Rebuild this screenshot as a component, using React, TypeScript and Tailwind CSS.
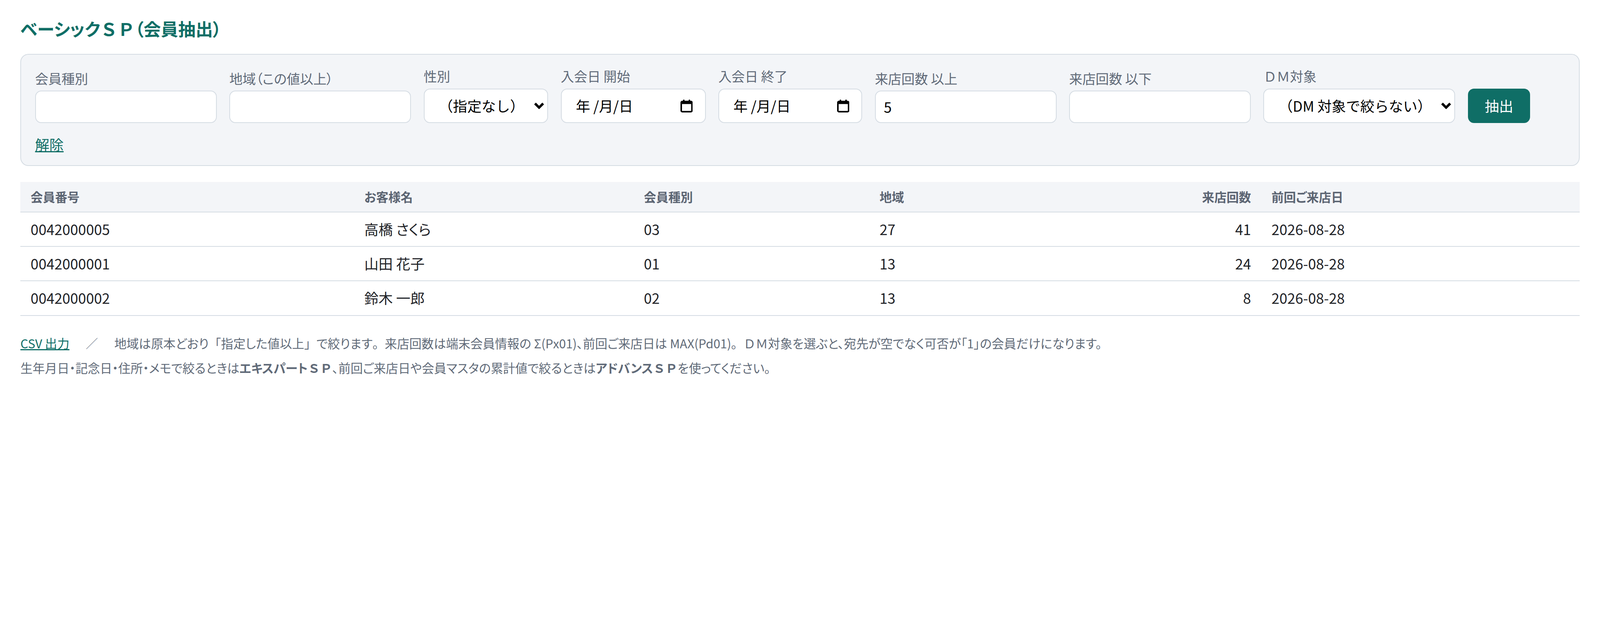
import { type ReactNode } from 'react';

const rows = [
  { no: '0042000005', name: '高橋 さくら', kind: '03', area: '27', visits: 41, last: '2026-08-28' },
  { no: '0042000001', name: '山田 花子', kind: '01', area: '13', visits: 24, last: '2026-08-28' },
  { no: '0042000002', name: '鈴木 一郎', kind: '02', area: '13', visits: 8, last: '2026-08-28' },
];

// 全角英字（ＳＰ・ＤＭ）や一部の約物は詰めずに表示する
const Fw = ({ children }: { children: ReactNode }) => (
  <span className="[font-feature-settings:normal]">{children}</span>
);

const Label = ({ children }: { children: ReactNode }) => (
  <span className="mb-1 block text-[13px] leading-4 text-[#606a78]">{children}</span>
);

const textInput = 'h-[32px] w-[178px] rounded-md border border-[#d5dce3] bg-white px-2 text-sm text-black outline-none';
const boxInput = 'h-[34px] rounded-md border border-[#d5dce3] bg-white text-sm text-black outline-none';

const Chevron = () => (
  <svg
    width="10"
    height="7"
    viewBox="0 0 10 7"
    className="pointer-events-none absolute top-1/2 right-[4px] -translate-y-1/2"
  >
    <path d="M1 1.2 L5 5.2 L9 1.2" fill="none" stroke="#000" strokeWidth="2.4" />
  </svg>
);

const Select = ({ width, options }: { width: string; options: string[] }) => (
  <div className="relative">
    <select
      className={`${boxInput} ${width} appearance-none pr-[30px] pl-[14px] [font-feature-settings:normal]`}
      defaultValue={options[0]}
    >
      {options.map((o) => (
        <option key={o} value={o}>
          {o}
        </option>
      ))}
    </select>
    <Chevron />
  </div>
);

// 日付欄（年/月/日 表示とカレンダーアイコン）
const DateField = ({ width }: { width: string }) => (
  <div className={`${boxInput} ${width} flex items-center justify-between px-3`}>
    <span className="pl-0.5 [font-feature-settings:normal]">年 /月/日</span>
    <svg width="12" height="13" viewBox="0 0 12 13" className="shrink-0">
      <rect x="0.75" y="2.25" width="10.5" height="10" rx="1" fill="none" stroke="#000" strokeWidth="1.5" />
      <rect x="0.75" y="2.25" width="10.5" height="2.5" fill="#000" />
      <rect x="2.5" y="0.5" width="1.5" height="3" fill="#000" />
      <rect x="8" y="0.5" width="1.5" height="3" fill="#000" />
    </svg>
  </div>
);

export default function App() {
  return (
    <div
      lang="ja"
      className="min-h-screen bg-white font-['Noto_Sans_CJK_JP','Noto_Sans',sans-serif] text-[#1f2328] [font-feature-settings:'palt']"
    >
      <div className="px-5 pt-4 [zoom:2.6123]">
        <h1 className="mb-[13px] text-[17px] font-bold leading-6 text-[#0f6e66]">
          ベーシック<Fw>ＳＰ</Fw>（会員抽出）
        </h1>

        {/* 抽出条件 */}
        <form
          className="rounded-lg border border-[#d5dce3] bg-[#f3f5f8] px-[13.6px] py-[13px]"
          onSubmit={(e) => e.preventDefault()}
        >
          <div className="flex flex-wrap items-end gap-x-[12.4px] gap-y-3">
            <label className="flex flex-col">
              <Label>会員種別</Label>
              <input type="text" className={textInput} />
            </label>
            <label className="flex flex-col">
              <Label>地域（この値以上）</Label>
              <input type="text" className={textInput} />
            </label>
            <label className="flex flex-col">
              <Label>性別</Label>
              <Select width="w-[122px]" options={['（指定なし）', '男性', '女性']} />
            </label>
            <label className="flex flex-col">
              <Label>入会日 開始</Label>
              <DateField width="w-[142px]" />
            </label>
            <label className="flex flex-col">
              <Label>入会日 終了</Label>
              <DateField width="w-[141px]" />
            </label>
            <label className="flex flex-col">
              <Label>来店回数 以上</Label>
              <input type="text" className={textInput} defaultValue="5" />
            </label>
            <label className="flex flex-col">
              <Label>来店回数 以下</Label>
              <input type="text" className={textInput} />
            </label>
            <label className="flex flex-col">
              <Label>
                <Fw>ＤＭ</Fw>対象
              </Label>
              <Select width="w-[188px]" options={['（DM 対象で絞らない）', 'DM 対象のみ']} />
            </label>
            <button type="submit" className="h-[34px] w-[61px] rounded-md bg-[#0f6e66] text-sm text-white">
              抽出
            </button>
          </div>
          <div className="mt-[14px] text-sm leading-[14px]">
            <a href="#" className="text-[#0f6e66] underline">解除</a>
          </div>
        </form>

        {/* 結果 */}
        <table className="mt-4 w-full table-fixed border-collapse text-left">
          <colgroup>
            <col className="w-[327px]" />
            <col className="w-[274px]" />
            <col className="w-[231px]" />
            <col className="w-[250px]" />
            <col className="w-[134px]" />
            <col />
          </colgroup>
          <thead>
            <tr className="border-b border-[#d5dce3] bg-[#f3f5f8] text-xs text-[#5b6472]">
              <th className="px-2.5 py-1.5 font-bold leading-[17px]">会員番号</th>
              <th className="px-2.5 py-1.5 font-bold leading-[17px]">お客様名</th>
              <th className="px-2.5 py-1.5 font-bold leading-[17px]">会員種別</th>
              <th className="px-2.5 py-1.5 font-bold leading-[17px]">地域</th>
              <th className="px-2.5 py-1.5 text-right font-bold leading-[17px]">来店回数</th>
              <th className="px-2.5 py-1.5 font-bold leading-[17px]">前回ご来店日</th>
            </tr>
          </thead>
          <tbody className="text-sm">
            {rows.map((r) => (
              <tr key={r.no} className="border-b border-[#d5dce3]">
                <td className="px-2.5 py-[6.5px] leading-5">{r.no}</td>
                <td className="px-2.5 py-[6.5px] leading-5">{r.name}</td>
                <td className="px-2.5 py-[6.5px] leading-5">{r.kind}</td>
                <td className="px-2.5 py-[6.5px] leading-5">{r.area}</td>
                <td className="px-2.5 py-[6.5px] text-right leading-5">{r.visits}</td>
                <td className="px-2.5 py-[6.5px] leading-5">{r.last}</td>
              </tr>
            ))}
          </tbody>
        </table>

        <p className="mt-[19px] text-xs leading-4 text-[#606a78]">
          <a href="#" className="text-[#0f6e66] underline">CSV 出力</a>
          <span className="mx-4 text-[#8a929e]">／</span>
          地域は原本どおり<Fw>「</Fw>指定した値以上<Fw>」</Fw>で絞ります<Fw>。</Fw>来店回数は端末会員情報の Σ(Px01)、前回ご来店日は MAX(Pd01)<Fw>。ＤＭ</Fw>対象を選ぶと、宛先が空でなく可否が「1」の会員だけになります。
        </p>
        <p className="mt-2 text-xs leading-4 text-[#606a78]">
          生年月日・記念日・住所・メモで絞るときは<b className="font-bold">エキスパート<Fw>ＳＰ</Fw></b>、前回ご来店日や会員マスタの累計値で絞るときは<b className="font-bold">アドバンス<Fw>ＳＰ</Fw></b>を使ってください。
        </p>
      </div>
    </div>
  );
}
